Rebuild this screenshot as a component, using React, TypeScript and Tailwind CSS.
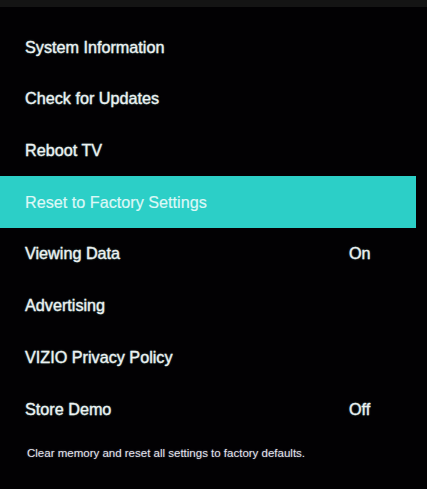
import React from 'react';

const items = [
  { label: 'System Information' },
  { label: 'Check for Updates' },
  { label: 'Reboot TV' },
  { label: 'Reset to Factory Settings', active: true },
  { label: 'Viewing Data', value: 'On' },
  { label: 'Advertising' },
  { label: 'VIZIO Privacy Policy' },
  { label: 'Store Demo', value: 'Off' },
];

const glow = '[text-shadow:0_0_2px_rgba(180,255,250,0.5)] [-webkit-text-stroke:0.3px_#ecf2f2]';

export default function App() {
  return (
    <div className="w-[427px] h-[489px] bg-[#020103] overflow-hidden font-['Liberation_Sans',Arial,sans-serif]">
      <div className="h-[7px] bg-[#141414]" />
      <div className="pt-[14px] w-[416px]">
        {items.map((item) => (
          <div
            key={item.label}
            className={`h-[51.7px] flex items-center pl-[25px] text-[16.2px] ${
              item.active
                ? 'bg-[#2ccfc7] text-[#dcf8f6] [-webkit-text-stroke:0.2px_#dcf8f6]'
                : `text-[#ecf2f2] ${glow}`
            }`}
          >
            <span className="flex-1">{item.label}</span>
            {item.value && <span className="w-[67px]">{item.value}</span>}
          </div>
        ))}
      </div>
      <p className="mt-[10px] pl-[27px] text-[11.5px] text-[#e4e4ec] [text-shadow:0_0_2px_rgba(200,200,255,0.4)]">
        Clear memory and reset all settings to factory defaults.
      </p>
    </div>
  );
}
